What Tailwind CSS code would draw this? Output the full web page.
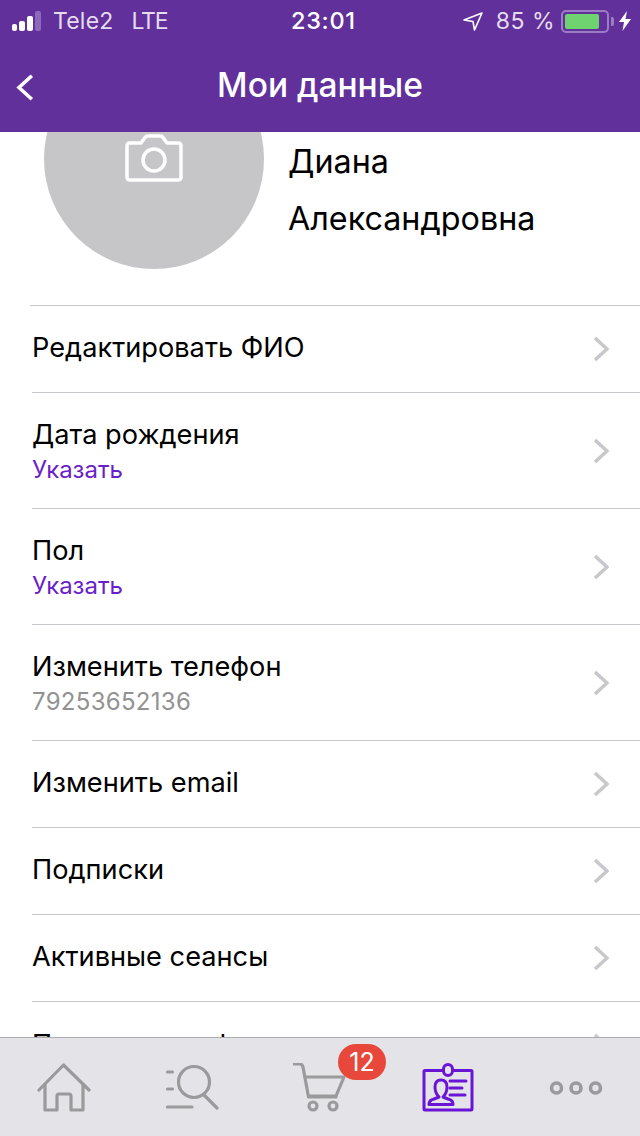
<!DOCTYPE html>
<html lang="ru">
<head>
<meta charset="utf-8">
<script src="https://cdn.jsdelivr.net/npm/@tailwindcss/browser@4"></script>
</head>
<body class="bg-white">
<div class="w-[640px] h-[1136px] flex flex-col overflow-hidden font-['Inter','Noto_Sans',sans-serif] text-black">
  <header class="relative z-10 h-[132px] shrink-0 bg-[#61309b] text-white">
    <div class="h-[42px] flex items-center justify-between pl-[12px] pr-[9px] relative">
      <div class="flex items-center text-[#e6dcf0] text-[23px] tracking-[0.2px]">
        <div class="flex items-end gap-[2px] w-[34px] h-[19px] mt-[1px]">
          <span class="w-[5px] h-[7px] bg-white rounded-[2px]"></span>
          <span class="w-[6px] h-[10px] bg-white rounded-[2px]"></span>
          <span class="w-[6px] h-[15px] bg-white rounded-[2px]"></span>
          <span class="w-[6px] h-[20px] bg-[#8e68bb] rounded-[2px]"></span>
        </div>
        <span class="ml-[7px]">Tele2</span>
        <span class="ml-[18px] tracking-[-1.2px]">LTE</span>
      </div>
      <div class="absolute left-[291px] top-[3px] text-[23.500px] font-medium tracking-[0.7px]">23:01</div>
      <div class="flex items-center text-[#e6dcf0] text-[23px]">
        <svg class="w-[20px] h-[20px]" viewBox="0 0 20 20" fill="none" stroke="#fff" stroke-width="1.6" stroke-linejoin="round"><path d="M1 9 L19 2 L11.5 19 L10 10.5 Z"/></svg>
        <span class="ml-[13px] tracking-[0.5px]">85 %</span>
        <div class="ml-[6px] w-[48px] h-[23px] border-2 border-[#9c7cc4] rounded-[5px] p-[2px]">
          <div class="w-[34px] h-full bg-[#6fd46f] rounded-[2px]"></div>
        </div>
        <span class="w-[3px] h-[9px] bg-[#9c7cc4] rounded-r-[2px] ml-[2px]"></span>
        <svg class="w-[12px] h-[20px] ml-[5px]" viewBox="0 0 12 20" fill="#fff"><path d="M8 0 L0 11 H5 L3.5 20 L12 8 H6.5 Z"/></svg>
      </div>
    </div>
    <div class="h-[90px] flex items-center justify-center relative">
      <svg class="absolute left-[15px] top-[31px] w-[20px] h-[28px]" viewBox="0 0 20 28" fill="none" stroke="#fff" stroke-width="3.6" stroke-linecap="square"><path d="M15.500 4 L4 14.500 L15.500 25"/></svg>
      <h1 class="text-[33.500px] font-medium mt-[-4px]">Мои данные</h1>
    </div>
  </header>

  <main class="flex-1 min-h-0 overflow-hidden relative">
    <section class="flex mt-[-83px] pl-[44px] h-[256px]">
      <div class="w-[220px] h-[220px] rounded-full bg-[#c6c6c8] shrink-0 relative">
        <svg class="absolute left-[81px] top-[85px] w-[58px] h-[48px]" viewBox="0 0 58 48" fill="none" stroke="#fff" stroke-width="3.500" stroke-linejoin="round">
          <path d="M5 9 H16 L20 3.500 Q21 2 23 2 H35 Q37 2 38 3.500 L42 9 H53 Q56 9 56 12 V43 Q56 46 53 46 H5 Q2 46 2 43 V12 Q2 9 5 9 Z"/>
          <circle cx="29" cy="26" r="11"/>
        </svg>
      </div>
      <div class="ml-[24px] text-[32.300px] leading-[56.500px] pt-[85px]">
        <div>Диана</div>
        <div>Александровна</div>
      </div>
    </section>

    <div class="ml-[30px] border-t border-[#c8c7cc]"></div>

    <ul class="pl-[32px] text-[27.200px] leading-[34px]">
      <li class="h-[87px] flex items-center justify-between border-b border-[#c8c7cc]">
        <span class="mb-[2px]">Редактировать ФИО</span>
        <svg class="w-[16px] h-[26px] mr-[31px]" viewBox="0 0 16 26" fill="none" stroke="#c7c7cc" stroke-width="3.500"><path d="M2 2 L14 13 L2 24"/></svg>
      </li>
      <li class="h-[116px] flex items-center justify-between border-b border-[#c8c7cc]">
        <div class="mt-[5px]">
          <div>Дата рождения</div>
          <div class="text-[24px] leading-[36px] text-[#6a1fc9]">Указать</div>
        </div>
        <svg class="w-[16px] h-[26px] mr-[31px]" viewBox="0 0 16 26" fill="none" stroke="#c7c7cc" stroke-width="3.500"><path d="M2 2 L14 13 L2 24"/></svg>
      </li>
      <li class="h-[116px] flex items-center justify-between border-b border-[#c8c7cc]">
        <div class="mt-[5px]">
          <div>Пол</div>
          <div class="text-[24px] leading-[36px] text-[#6a1fc9]">Указать</div>
        </div>
        <svg class="w-[16px] h-[26px] mr-[31px]" viewBox="0 0 16 26" fill="none" stroke="#c7c7cc" stroke-width="3.500"><path d="M2 2 L14 13 L2 24"/></svg>
      </li>
      <li class="h-[116px] flex items-center justify-between border-b border-[#c8c7cc]">
        <div class="mt-[5px]">
          <div>Изменить телефон</div>
          <div class="text-[24px] leading-[36px] text-[#929292] tracking-[0.3px]">79253652136</div>
        </div>
        <svg class="w-[16px] h-[26px] mr-[31px]" viewBox="0 0 16 26" fill="none" stroke="#c7c7cc" stroke-width="3.500"><path d="M2 2 L14 13 L2 24"/></svg>
      </li>
      <li class="h-[87px] flex items-center justify-between border-b border-[#c8c7cc]">
        <span class="mb-[2px]">Изменить email</span>
        <svg class="w-[16px] h-[26px] mr-[31px]" viewBox="0 0 16 26" fill="none" stroke="#c7c7cc" stroke-width="3.500"><path d="M2 2 L14 13 L2 24"/></svg>
      </li>
      <li class="h-[87px] flex items-center justify-between border-b border-[#c8c7cc]">
        <span class="mb-[2px]">Подписки</span>
        <svg class="w-[16px] h-[26px] mr-[31px]" viewBox="0 0 16 26" fill="none" stroke="#c7c7cc" stroke-width="3.500"><path d="M2 2 L14 13 L2 24"/></svg>
      </li>
      <li class="h-[87px] flex items-center justify-between border-b border-[#c8c7cc]">
        <span class="mb-[2px]">Активные сеансы</span>
        <svg class="w-[16px] h-[26px] mr-[31px]" viewBox="0 0 16 26" fill="none" stroke="#c7c7cc" stroke-width="3.500"><path d="M2 2 L14 13 L2 24"/></svg>
      </li>
      <li class="h-[87px] flex items-center justify-between">
        <span class="mb-[2px]">Политика конфиденциальности</span>
        <svg class="w-[16px] h-[26px] mr-[31px]" viewBox="0 0 16 26" fill="none" stroke="#c7c7cc" stroke-width="3.500"><path d="M2 2 L14 13 L2 24"/></svg>
      </li>
    </ul>
  </main>

  <nav class="h-[99px] shrink-0 bg-[#e4e4e8] border-t border-[#aeaeb0] grid grid-cols-5 items-center justify-items-center">
    <svg class="w-[54px] h-[50px] mt-[2px]" viewBox="0 0 54 50" fill="none" stroke="#9a9a9c" stroke-width="3.200" stroke-linecap="round" stroke-linejoin="round">
      <path d="M2 27 L26.500 2 L52 27"/>
      <path d="M8 22 V47 H20 V33 Q20 31 22 31 H32 Q34 31 34 33 V47 H46 V22"/>
    </svg>
    <svg class="w-[54px] h-[50px] mt-[2px]" viewBox="0 0 54 50" fill="none" stroke="#9a9a9c" stroke-width="3.200" stroke-linecap="round">
      <circle cx="29" cy="19" r="15.500"/>
      <path d="M39 32 L52 45"/>
      <path d="M2.500 9 H7.500"/>
      <path d="M2.500 26 H7.500"/>
      <path d="M2.500 44 H27"/>
    </svg>
    <div class="relative w-[54px] h-[50px] mt-[2px]">
      <svg class="w-[54px] h-[50px]" viewBox="0 0 54 50" fill="none" stroke="#9a9a9c" stroke-width="3.200" stroke-linecap="round" stroke-linejoin="round">
        <path d="M1 1 H7 Q9 1 10 4 L15.500 34 H43"/>
        <path d="M12 14 H51 L43 33 L16 33"/>
        <circle cx="20" cy="43" r="4"/>
        <circle cx="40" cy="43" r="4"/>
      </svg>
      <span class="absolute left-[45px] top-[-19px] w-[48px] h-[36px] rounded-full bg-[#e8483c] text-white text-[25px] leading-[36px] text-center">12</span>
    </div>
    <svg class="w-[54px] h-[50px] mt-[2px]" viewBox="0 0 54 50" fill="none" stroke="#6a14d8" stroke-width="3" stroke-linecap="round" stroke-linejoin="round">
      <path d="M22 7.500 H4 Q3 7.500 3 8.500 V46 Q3 47 4 47 H50 Q51 47 51 46 V8.500 Q51 7.500 50 7.500 H32"/>
      <rect x="22.500" y="1.500" width="9" height="11" rx="4.500"/>
      <path d="M8 41.500 Q8 37 13 36 L18 34 Q14 30 14 24 Q14 17 20 17 Q26 17 26 24 Q26 30 22 34 L27 36 Q32 37 32 41.500 Z"/>
      <path d="M29 18 H45"/>
      <path d="M29 25 H41"/>
      <path d="M29 32 H44"/>
    </svg>
    <svg class="w-[54px] h-[18px] mt-[2px]" viewBox="0 0 54 18" fill="none" stroke="#9a9a9c" stroke-width="3.600">
      <circle cx="7.500" cy="9" r="5"/>
      <circle cx="27" cy="9" r="5"/>
      <circle cx="46.500" cy="9" r="5"/>
    </svg>
  </nav>
</div>
</body>
</html>
